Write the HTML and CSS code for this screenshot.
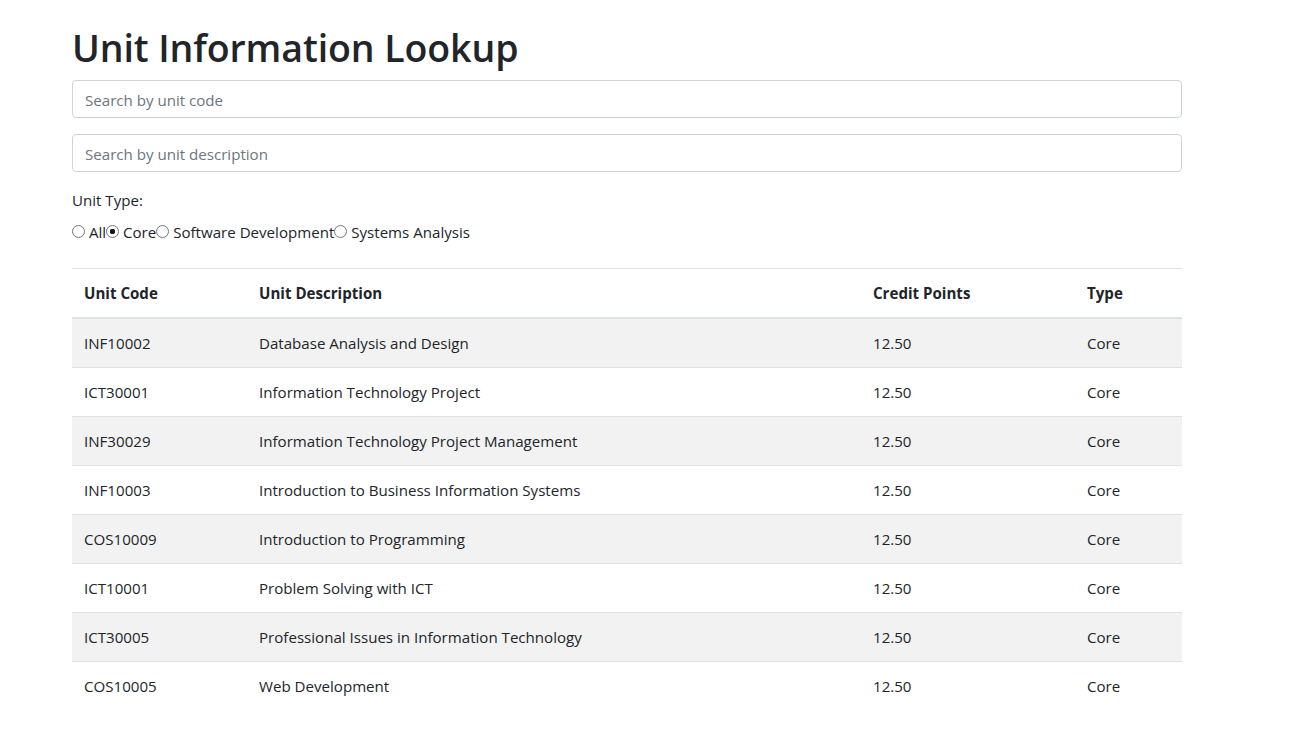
FILE: index.html
```html
<!DOCTYPE html>
<html lang="en">
<head>
<meta charset="utf-8">
<title>Unit Information Lookup</title>
<link rel="stylesheet" href="styles.css">
</head>
<body>
<main class="container">
  <h1 class="title">Unit Information Lookup</h1>
  <input class="field" type="text" placeholder="Search by unit code">
  <input class="field" type="text" placeholder="Search by unit description">
  <div class="filter">
    <div class="filter-label">Unit Type:</div>
    <div class="radios"><label class="opt"><input type="radio" name="type"> All</label><label class="opt"><input type="radio" name="type" checked> Core</label><label class="opt"><input type="radio" name="type"> Software Development</label><label class="opt"><input type="radio" name="type"> Systems Analysis</label></div>
  </div>
  <table class="units">
    <colgroup>
      <col class="c1"><col class="c2"><col class="c3"><col class="c4">
    </colgroup>
    <thead>
      <tr><th>Unit Code</th><th>Unit Description</th><th>Credit Points</th><th>Type</th></tr>
    </thead>
    <tbody>
      <tr><td>INF10002</td><td>Database Analysis and Design</td><td>12.50</td><td>Core</td></tr>
      <tr><td>ICT30001</td><td>Information Technology Project</td><td>12.50</td><td>Core</td></tr>
      <tr><td>INF30029</td><td>Information Technology Project Management</td><td>12.50</td><td>Core</td></tr>
      <tr><td>INF10003</td><td>Introduction to Business Information Systems</td><td>12.50</td><td>Core</td></tr>
      <tr><td>COS10009</td><td>Introduction to Programming</td><td>12.50</td><td>Core</td></tr>
      <tr><td>ICT10001</td><td>Problem Solving with ICT</td><td>12.50</td><td>Core</td></tr>
      <tr><td>ICT30005</td><td>Professional Issues in Information Technology</td><td>12.50</td><td>Core</td></tr>
      <tr><td>COS10005</td><td>Web Development</td><td>12.50</td><td>Core</td></tr>
    </tbody>
  </table>
</main>
</body>
</html>
```
FILE: styles.css
```css
* { box-sizing: border-box; }
html, body { margin: 0; padding: 0; background: #fff; }
body {
  font-family: "Open Sans", "Noto Sans", sans-serif;
  font-size: 15.1px;
  line-height: 24px;
  color: #212529;
}
.container {
  width: 1110px;
  margin-left: 72px;
  padding-top: 24px;
}
.title {
  margin: 0 0 8px 0;
  font-size: 37.5px;
  line-height: 48px;
  font-weight: 600;
  letter-spacing: -0.1px;
}
.field {
  display: block;
  width: 100%;
  height: 38px;
  padding: 7px 12px 5px;
  margin: 0 0 16px 0;
  font: inherit;
  color: #495057;
  background: #fff;
  border: 1px solid #ced4da;
  border-radius: 4px;
  outline: none;
}
.field::placeholder { color: #6c757d; opacity: 1; }
.filter { margin-bottom: 24px; }
.filter-label { margin-bottom: 8px; }
.radios { display: flex; align-items: center; }
.opt { display: inline-flex; align-items: center; white-space: pre; }
.opt input {
  -webkit-appearance: none;
  appearance: none;
  margin: 0 0 1px 0;
  width: 13px;
  height: 13px;
  border: 1px solid #767676;
  border-radius: 50%;
  background: #fff;
}
.opt input:checked {
  background: radial-gradient(circle, #1a1a1a 0 2.6px, #fff 3px);
}
.units {
  width: 100%;
  border-collapse: collapse;
}
.c1 { width: 175px; }
.c2 { width: 614px; }
.c3 { width: 214px; }
.c4 { width: 107px; }
.units th, .units td {
  padding: 12px;
  text-align: left;
  vertical-align: top;
  border-top: 1px solid #dee2e6;
}
.units th { font-weight: 700; border-bottom: 2px solid #dee2e6; }
.units tbody tr:nth-child(odd) { background: #f2f2f2; }
.units tbody tr:first-child td { border-top: none; }
```
